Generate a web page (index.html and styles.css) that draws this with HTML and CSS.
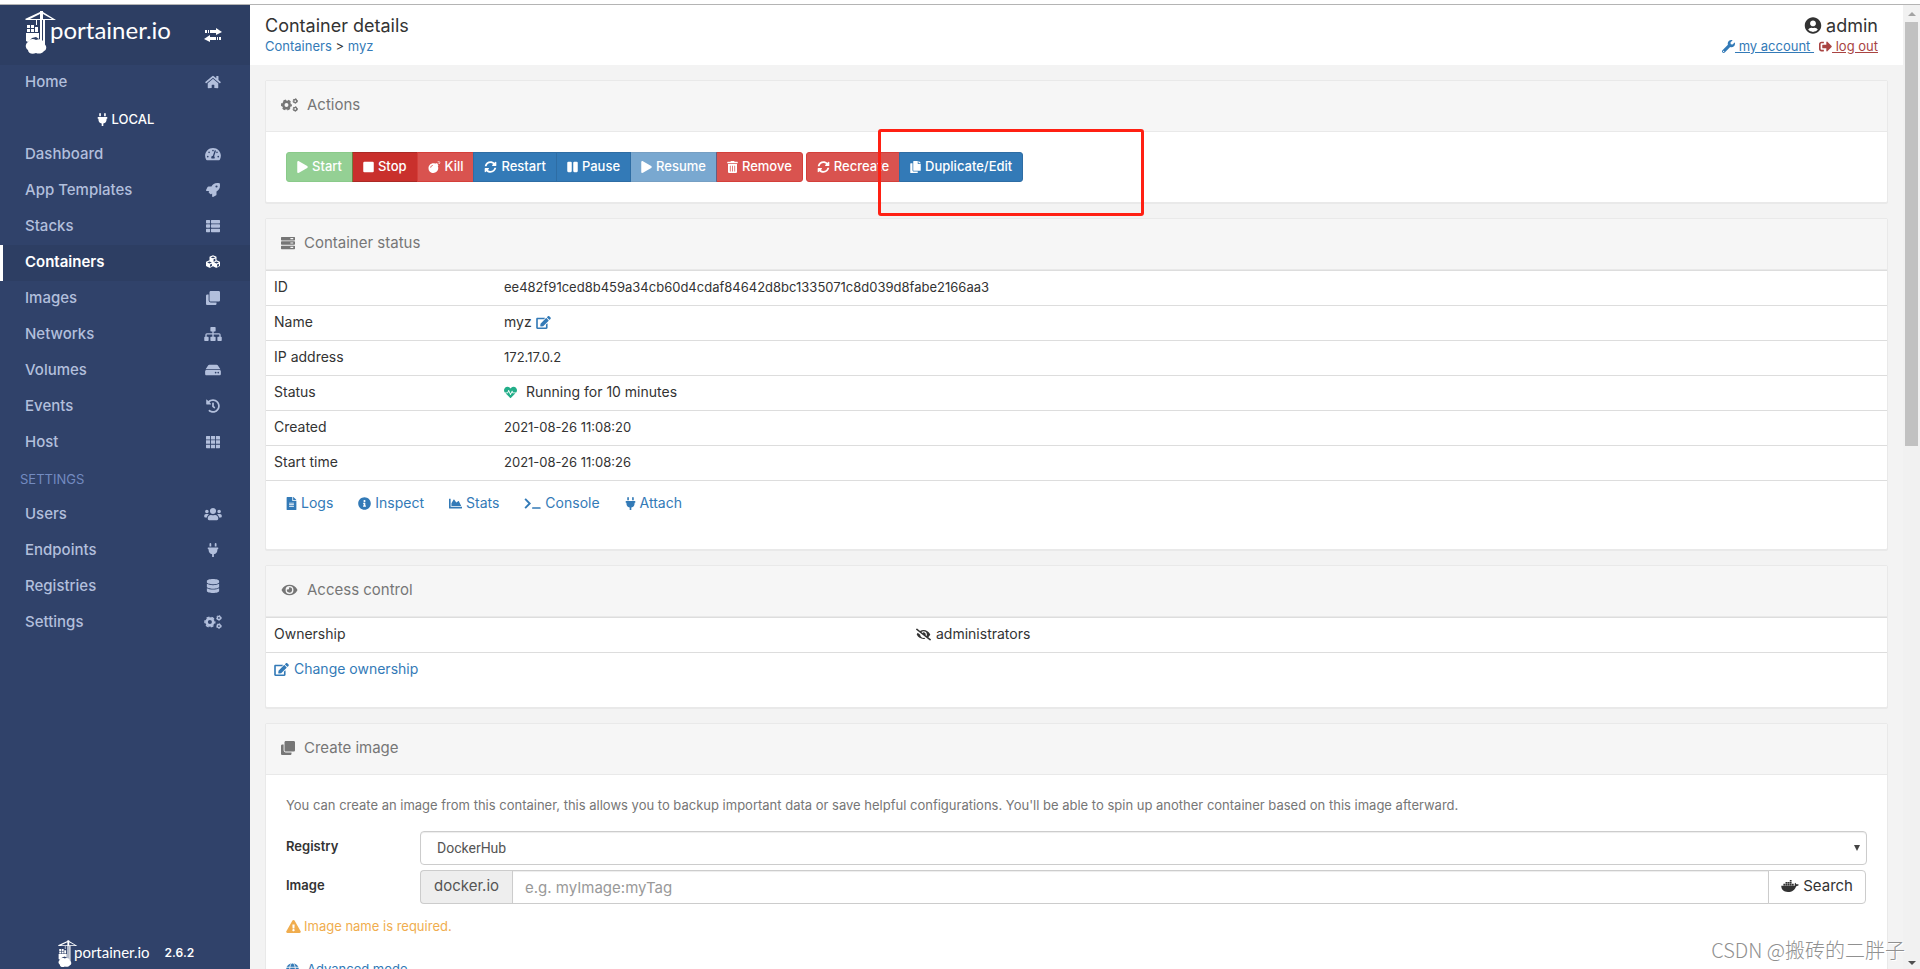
FILE: index.html
```html
<!DOCTYPE html>
<html lang="en">
<head>
<meta charset="utf-8">
<title>Portainer - Container details</title>
<link rel="stylesheet" href="styles.css">
</head>
<body>
<svg class="sprite" aria-hidden="true">
  <symbol id="home" viewBox="0 0 576 512"><path d="M280.37 148.26L96 300.11V464a16 16 0 0 0 16 16l112.06-.29a16 16 0 0 0 15.92-16V368a16 16 0 0 1 16-16h64a16 16 0 0 1 16 16v95.64a16 16 0 0 0 16 16.05L464 480a16 16 0 0 0 16-16V300L295.67 148.26a12.19 12.19 0 0 0-15.3 0zM571.6 251.47L488 182.56V44.05a12 12 0 0 0-12-12h-56a12 12 0 0 0-12 12v72.61L318.47 43a48 48 0 0 0-61 0L4.34 251.47a12 12 0 0 0-1.6 16.9l25.5 31A12 12 0 0 0 45.15 301l235.22-193.74a12.19 12.19 0 0 1 15.3 0L530.9 301a12 12 0 0 0 16.9-1.6l25.5-31a12 12 0 0 0-1.7-16.93z"/></symbol>
  <symbol id="plug" viewBox="0 0 384 512"><path d="M320,32a32,32,0,0,0-64,0v96h64Zm48,128H16A16,16,0,0,0,0,176v32a16,16,0,0,0,16,16H32v32A160.07,160.07,0,0,0,160,412.8V512h64V412.8A160.07,160.07,0,0,0,352,256V224h16a16,16,0,0,0,16-16V176A16,16,0,0,0,368,160ZM128,32a32,32,0,0,0-64,0v96h64Z"/></symbol>
  <symbol id="gauge" viewBox="0 0 576 512"><path d="M288 32C128.94 32 0 160.94 0 320c0 52.8 14.25 102.26 39.06 144.8 5.61 9.62 16.3 15.2 27.44 15.2h443c11.14 0 21.83-5.58 27.44-15.2C561.75 422.26 576 372.8 576 320c0-159.06-128.94-288-288-288zm0 64c14.71 0 26.58 10.13 30.32 23.65-1.11 2.26-2.64 4.23-3.45 6.67l-9.22 27.67c-5.13 3.49-10.97 6.01-17.64 6.01-17.67 0-32-14.33-32-32S270.33 96 288 96zM96 384c-17.67 0-32-14.33-32-32s14.33-32 32-32 32 14.33 32 32-14.33 32-32 32zm48-160c-17.67 0-32-14.33-32-32s14.33-32 32-32 32 14.33 32 32-14.33 32-32 32zm246.77-72.41l-61.33 184C343.13 347.33 352 364.54 352 384c0 11.72-3.38 22.55-8.88 32H232.88c-5.5-9.45-8.88-20.28-8.88-32 0-33.94 26.5-61.43 59.9-63.59l61.34-184.01c4.17-12.56 17.73-19.45 30.36-15.17 12.57 4.19 19.35 17.79 15.17 30.36zm14.66 57.2l15.52-46.55c3.47-1.29 7.13-2.23 11.05-2.23 17.67 0 32 14.33 32 32s-14.33 32-32 32c-11.38-.01-20.89-6.28-26.57-15.22zM480 384c-17.67 0-32-14.33-32-32s14.33-32 32-32 32 14.33 32 32-14.33 32-32 32z"/></symbol>
  <symbol id="rocket" viewBox="0 0 512 512"><path d="M505.12 19.09c-1.19-5.53-6.66-11-12.21-12.18C460.72 0 435.51 0 410.41 0 307.18 0 245.27 55.2 199.05 128H94.84c-16.35.02-35.56 11.88-42.89 26.48L2.52 253.3A28.4 28.4 0 0 0 0 264a24 24 0 0 0 24 24h103.82l-22.48 22.47c-11.36 11.36-13 32.26 0 45.25l50.91 50.9c11.15 11.19 32.15 13.16 45.27 0L224 384.16V488a24 24 0 0 0 24 24 28.56 28.56 0 0 0 10.7-2.52l98.73-49.39c14.63-7.3 26.51-26.5 26.51-42.86V312.8c72.6-46.31 128.03-108.41 128.03-211.1.1-25.2.1-50.4-6.85-82.61zM384.04 168A40 40 0 1 1 424.05 128 40 40 0 0 1 384.04 168z"/></symbol>
  <symbol id="list" viewBox="0 0 512 512"><path d="M24 32h101a24 24 0 0 1 24 24v80a24 24 0 0 1-24 24H24a24 24 0 0 1-24-24V56a24 24 0 0 1 24-24zM205 32h283a24 24 0 0 1 24 24v80a24 24 0 0 1-24 24H205a24 24 0 0 1-24-24V56a24 24 0 0 1 24-24zM24 192h101a24 24 0 0 1 24 24v80a24 24 0 0 1-24 24H24a24 24 0 0 1-24-24v-80a24 24 0 0 1 24-24zM205 192h283a24 24 0 0 1 24 24v80a24 24 0 0 1-24 24H205a24 24 0 0 1-24-24v-80a24 24 0 0 1 24-24zM24 352h101a24 24 0 0 1 24 24v80a24 24 0 0 1-24 24H24a24 24 0 0 1-24-24v-80a24 24 0 0 1 24-24zM205 352h283a24 24 0 0 1 24 24v80a24 24 0 0 1-24 24H205a24 24 0 0 1-24-24v-80a24 24 0 0 1 24-24z"/></symbol>
  <symbol id="cubes" viewBox="0 0 512 512"><path fill-rule="evenodd" d="M256 8l112 44q16 7 16 24v120l106 42q22 9 22 30v116q0 18-16 26l-108 54q-12 6-24 0l-108-54-108 54q-12 6-24 0L16 410Q0 402 0 384V268q0-21 22-30l106-42V76q0-17 16-24zM256 56l-84 32 84 34 84-34zM276 158v88l66-26v-90zM128 242l-86 32 86 34 86-34zM148 348v86l68-34v-84zM384 242l-86 32 86 34 86-34zM404 348v86l68-34v-84z"/></symbol>
  <symbol id="clone" viewBox="0 0 512 512"><path d="M464 0c26.510 0 48 21.490 48 48v288c0 26.510-21.490 48-48 48H176c-26.510 0-48-21.490-48-48V48c0-26.510 21.490-48 48-48h288M176 416c-44.112 0-80-35.888-80-80V128H48c-26.510 0-48 21.490-48 48v288c0 26.510 21.490 48 48 48h288c26.510 0 48-21.490 48-48v-48H176z"/></symbol>
  <symbol id="sitemap" viewBox="0 0 640 512"><path d="M248 0h144a24 24 0 0 1 24 24v112a24 24 0 0 1-24 24h-48v64h200a56 56 0 0 1 56 56v72h16a24 24 0 0 1 24 24v112a24 24 0 0 1-24 24H504a24 24 0 0 1-24-24V376a24 24 0 0 1 24-24h48v-80H344v80h48a24 24 0 0 1 24 24v112a24 24 0 0 1-24 24H248a24 24 0 0 1-24-24V376a24 24 0 0 1 24-24h48v-80H88v80h48a24 24 0 0 1 24 24v112a24 24 0 0 1-24 24H24a24 24 0 0 1-24-24V376a24 24 0 0 1 24-24h16v-72a56 56 0 0 1 56-56h200v-64h-48a24 24 0 0 1-24-24V24a24 24 0 0 1 24-24z"/></symbol>
  <symbol id="hdd" viewBox="0 0 576 512"><path d="M576 304v96c0 26.51-21.49 48-48 48H48c-26.51 0-48-21.49-48-48v-96c0-26.51 21.49-48 48-48h480c26.51 0 48 21.49 48 48zm-48-80a79.557 79.557 0 0 1 30.777 6.165L462.25 85.374A48.003 48.003 0 0 0 422.311 64H153.689a48 48 0 0 0-39.938 21.374L17.223 230.165A79.557 79.557 0 0 1 48 224h480zm-48 96c-17.673 0-32 14.327-32 32s14.327 32 32 32 32-14.327 32-32-14.327-32-32-32zm-96 0c-17.673 0-32 14.327-32 32s14.327 32 32 32 32-14.327 32-32-14.327-32-32-32z"/></symbol>
  <symbol id="history" viewBox="0 0 512 512"><path d="M504 255.531c.253 136.64-111.18 248.372-247.82 248.468-59.015.042-113.223-20.53-155.822-54.911-11.077-8.94-11.905-25.541-1.839-35.607l11.267-11.267c8.609-8.609 22.353-9.551 31.891-1.984C173.062 425.135 212.781 440 256 440c101.705 0 184-82.311 184-184 0-101.705-82.311-184-184-184-48.814 0-93.149 18.969-126.068 49.932l50.754 50.754c10.08 10.08 2.941 27.314-11.313 27.314H24c-8.837 0-16-7.163-16-16V38.627c0-14.254 17.234-21.393 27.314-11.314l49.372 49.372C129.209 34.136 189.552 8 256 8c136.81 0 247.747 110.78 248 247.531zm-180.912 78.784l9.823-12.63c8.138-10.463 6.253-25.542-4.21-33.679L288 256.349V152c0-13.255-10.745-24-24-24h-16c-13.255 0-24 10.745-24 24v135.651l65.409 50.874c10.463 8.137 25.541 6.253 33.679-4.21z"/></symbol>
  <symbol id="grid" viewBox="0 0 512 512"><path d="M24 32h125v128H0V56a24 24 0 0 1 24-24zM181 32h150v128H181zM363 32h125a24 24 0 0 1 24 24v104H363zM0 192h149v128H0zM181 192h150v128H181zM363 192h149v128H363zM0 352h149v128H24a24 24 0 0 1-24-24zM181 352h150v128H181zM363 352h149v104a24 24 0 0 1-24 24H363z"/></symbol>
  <symbol id="users" viewBox="0 0 640 512"><path d="M96 224c35.3 0 64-28.7 64-64s-28.7-64-64-64-64 28.7-64 64 28.7 64 64 64zm448 0c35.3 0 64-28.7 64-64s-28.7-64-64-64-64 28.7-64 64 28.7 64 64 64zm32 32h-64c-17.6 0-33.5 7.100-45.100 18.600 40.300 22.100 68.900 62 75.100 109.400h66c17.700 0 32-14.300 32-32v-32c0-35.300-28.700-64-64-64zm-256 0c61.900 0 112-50.100 112-112S381.900 32 320 32 208 82.100 208 144s50.100 112 112 112zm76.800 32h-8.300c-20.800 10-43.900 16-68.500 16s-47.600-6-68.500-16h-8.300C179.600 288 128 339.600 128 403.200V432c0 26.500 21.500 48 48 48h288c26.500 0 48-21.500 48-48v-28.800c0-63.600-51.600-115.200-115.200-115.200zm-223.700-13.400C161.500 263.100 145.600 256 128 256H64c-35.300 0-64 28.700-64 64v32c0 17.700 14.300 32 32 32h65.900c6.300-47.400 34.900-87.300 75.200-109.400z"/></symbol>
  <symbol id="database" viewBox="0 0 448 512"><path d="M448 73.143v45.714C448 159.143 347.667 192 224 192S0 159.143 0 118.857V73.143C0 32.857 100.333 0 224 0s224 32.857 224 73.143zM448 176v102.857C448 319.143 347.667 352 224 352S0 319.143 0 278.857V176c48.125 33.143 136.208 48.572 224 48.572S399.874 209.143 448 176zm0 160v102.857C448 479.143 347.667 512 224 512S0 479.143 0 438.857V336c48.125 33.143 136.208 48.572 224 48.572S399.874 369.143 448 336z"/></symbol>
  <symbol id="cogs" viewBox="0 0 640 512"><g fill="none" stroke="currentColor"><circle cx="206" cy="256" r="122" stroke-width="96"/><circle cx="206" cy="256" r="180" stroke-width="52" stroke-dasharray="110 78.500" stroke-dashoffset="55"/><circle cx="536" cy="106" r="58" stroke-width="50"/><circle cx="536" cy="106" r="88" stroke-width="32" stroke-dasharray="52 40.150"/><circle cx="536" cy="406" r="58" stroke-width="50"/><circle cx="536" cy="406" r="88" stroke-width="32" stroke-dasharray="52 40.150"/></g></symbol>
  <symbol id="play" viewBox="0 0 448 512"><path d="M424.400 214.700L72.400 6.600C43.800-10.300 0 6.100 0 47.900V464c0 37.500 40.700 60.100 72.400 41.300l352-208c31.400-18.500 31.500-64.100 0-82.600z"/></symbol>
  <symbol id="stop" viewBox="0 0 448 512"><rect y="32" width="448" height="448" rx="48"/></symbol>
  <symbol id="pause" viewBox="0 0 448 512"><rect y="31" width="192" height="448" rx="48"/><rect x="256" y="31" width="192" height="448" rx="48"/></symbol>
  <symbol id="bomb" viewBox="0 0 512 512"><path d="M440.500 88.500l-52 52L415 167c9.400 9.400 9.400 24.600 0 33.900l-17.400 17.400c11.800 26.100 18.400 55.100 18.400 85.600 0 114.900-93.100 208-208 208S0 418.900 0 304 93.100 96 208 96c30.500 0 59.500 6.600 85.600 18.400L311 97c9.400-9.400 24.600-9.400 33.900 0l26.500 26.500 52-52 17.100 17zM500 60h-24c-6.600 0-12 5.400-12 12s5.400 12 12 12h24c6.600 0 12-5.400 12-12s-5.400-12-12-12zM440 0c-6.600 0-12 5.400-12 12v24c0 6.600 5.400 12 12 12s12-5.400 12-12V12c0-6.600-5.400-12-12-12zm33.900 55l17-17c4.700-4.700 4.700-12.300 0-17-4.700-4.700-12.300-4.700-17 0l-17 17c-4.700 4.700-4.700 12.300 0 17 4.800 4.700 12.400 4.700 17 0zm-67.800 0c4.700 4.700 12.300 4.700 17 0 4.700-4.700 4.700-12.300 0-17l-17-17c-4.700-4.700-12.300-4.700-17 0-4.700 4.700-4.700 12.300 0 17l17 17zm67.800 34c-4.700-4.700-12.300-4.700-17 0-4.700 4.700-4.700 12.300 0 17l17 17c4.700 4.700 12.300 4.700 17 0 4.700-4.700 4.700-12.300 0-17l-17-17zM112 272c0-35.300 28.700-64 64-64 8.800 0 16-7.200 16-16s-7.200-16-16-16c-52.900 0-96 43.100-96 96 0 8.800 7.200 16 16 16s16-7.200 16-16z"/></symbol>
  <symbol id="sync" viewBox="0 0 512 512"><path d="M370.720 133.280C339.458 104.008 298.888 87.962 255.848 88c-77.458.068-144.328 53.178-162.791 126.850-1.344 5.363-6.122 9.150-11.651 9.150H24.103c-7.498 0-13.194-6.807-11.807-14.176C33.933 94.924 134.813 8 256 8c66.448 0 126.791 26.136 171.315 68.685L463.030 40.970C478.149 25.851 504 36.559 504 57.941V192c0 13.255-10.745 24-24 24H345.941c-21.382 0-32.090-25.851-16.971-40.971l41.750-41.749zM32 296h134.059c21.382 0 32.090 25.851 16.971 40.971l-41.750 41.750c31.262 29.273 71.835 45.319 114.876 45.280 77.418-.070 144.315-53.144 162.787-126.849 1.344-5.363 6.122-9.150 11.651-9.150h57.304c7.498 0 13.194 6.807 11.807 14.176C478.067 417.076 377.187 504 256 504c-66.448 0-126.791-26.136-171.315-68.685L48.970 471.030C33.851 486.149 8 475.441 8 454.059V320c0-13.255 10.745-24 24-24z"/></symbol>
  <symbol id="trash" viewBox="0 0 448 512"><path d="M32 464a48 48 0 0 0 48 48h288a48 48 0 0 0 48-48V128H32zm272-256a16 16 0 0 1 32 0v224a16 16 0 0 1-32 0zm-96 0a16 16 0 0 1 32 0v224a16 16 0 0 1-32 0zm-96 0a16 16 0 0 1 32 0v224a16 16 0 0 1-32 0zM432 32H312l-9.400-18.700A24 24 0 0 0 281.100 0H166.800a23.720 23.720 0 0 0-21.400 13.300L136 32H16A16 16 0 0 0 0 48v32a16 16 0 0 0 16 16h416a16 16 0 0 0 16-16V48a16 16 0 0 0-16-16z"/></symbol>
  <symbol id="copy" viewBox="0 0 448 512"><path d="M320 448v40c0 13.255-10.745 24-24 24H24c-13.255 0-24-10.745-24-24V120c0-13.255 10.745-24 24-24h72v296c0 30.879 25.121 56 56 56h168zm0-344V0H152c-13.255 0-24 10.745-24 24v368c0 13.255 10.745 24 24 24h272c13.255 0 24-10.745 24-24V128H344c-13.200 0-24-10.800-24-24zm120.971-31.029L375.029 7.029A24 24 0 0 0 358.059 0H352v96h96v-6.059a24 24 0 0 0-7.029-16.970z"/></symbol>
  <symbol id="server" viewBox="0 0 512 512"><path fill-rule="evenodd" d="M24 32h464a24 24 0 0 1 24 24v80a24 24 0 0 1-24 24H24a24 24 0 0 1-24-24V56a24 24 0 0 1 24-24zM24 192h464a24 24 0 0 1 24 24v80a24 24 0 0 1-24 24H24a24 24 0 0 1-24-24v-80a24 24 0 0 1 24-24zM24 352h464a24 24 0 0 1 24 24v80a24 24 0 0 1-24 24H24a24 24 0 0 1-24-24v-80a24 24 0 0 1 24-24zM344 76h104v40H344zM344 236h104v40H344zM344 396h104v40H344z"/></symbol>
  <symbol id="edit" viewBox="0 0 576 512"><path d="M402.600 83.200l90.200 90.200c3.800 3.800 3.800 10 0 13.800L274.400 405.600l-92.800 10.300c-12.400 1.400-22.900-9.100-21.500-21.500l10.300-92.800L388.800 83.200c3.800-3.800 10-3.800 13.800 0zm162-22.900l-48.800-48.800c-15.200-15.200-39.900-15.200-55.200 0l-35.400 35.400c-3.800 3.800-3.800 10 0 13.800l90.200 90.200c3.800 3.800 10 3.800 13.800 0l35.400-35.400c15.200-15.300 15.200-40 0-55.200zM384 346.200V448H64V128h229.800c3.200 0 6.200-1.300 8.500-3.500l40-40c7.600-7.600 2.200-20.500-8.500-20.500H48C21.500 64 0 85.500 0 112v352c0 26.500 21.500 48 48 48h352c26.500 0 48-21.500 48-48V306.200c0-10.700-12.900-16-20.500-8.500l-40 40c-2.200 2.300-3.500 5.300-3.500 8.500z"/></symbol>
  <symbol id="heartbeat" viewBox="0 0 512 512"><path d="M320.200 243.800l-49.700 99.400c-6 12.100-23.400 11.700-28.900-.6l-56.900-126.300-30 71.700H60.600l182.500 186.500c7.100 7.300 18.600 7.300 25.700 0L451.400 288H342.300l-22.100-44.200zM473.700 73.900l-2.400-2.500c-51.500-52.600-135.800-52.600-187.400 0L256 100l-27.900-28.500c-51.500-52.700-135.900-52.700-187.400 0l-2.400 2.400C-10.400 123.700-12.500 203 31 256h102.400l35.900-86.200c5.400-12.900 23.600-13.200 29.400-.4l58.200 129.300 49-97.900c5.900-11.800 22.700-11.800 28.600 0l27.600 55.200H481c43.500-53 41.400-132.300-7.300-182.100z"/></symbol>
  <symbol id="file" viewBox="0 0 384 512"><path d="M224 136V0H24C10.700 0 0 10.700 0 24v464c0 13.300 10.700 24 24 24h336c13.300 0 24-10.700 24-24V160H248c-13.200 0-24-10.800-24-24zm64 236c0 6.600-5.400 12-12 12H108c-6.600 0-12-5.400-12-12v-8c0-6.600 5.400-12 12-12h168c6.600 0 12 5.400 12 12v8zm0-64c0 6.600-5.400 12-12 12H108c-6.600 0-12-5.400-12-12v-8c0-6.600 5.400-12 12-12h168c6.600 0 12 5.400 12 12v8zm0-72v8c0 6.600-5.400 12-12 12H108c-6.600 0-12-5.400-12-12v-8c0-6.600 5.400-12 12-12h168c6.600 0 12 5.400 12 12zm96-114.100v6.100H256V0h6.100c6.400 0 12.500 2.500 17 7l97.900 98c4.500 4.500 7 10.600 7 16.900z"/></symbol>
  <symbol id="info" viewBox="0 0 512 512"><path d="M256 8C119.043 8 8 119.083 8 256c0 136.997 111.043 248 248 248s248-111.003 248-248C504 119.083 392.957 8 256 8zm0 110c23.196 0 42 18.804 42 42s-18.804 42-42 42-42-18.804-42-42 18.804-42 42-42zm56 254c0 6.627-5.373 12-12 12h-88c-6.627 0-12-5.373-12-12v-24c0-6.627 5.373-12 12-12h12v-64h-12c-6.627 0-12-5.373-12-12v-24c0-6.627 5.373-12 12-12h64c6.627 0 12 5.373 12 12v100h12c6.627 0 12 5.373 12 12v24z"/></symbol>
  <symbol id="chart" viewBox="0 0 512 512"><path d="M500 384c6.600 0 12 5.400 12 12v40c0 6.600-5.400 12-12 12H12c-6.600 0-12-5.400-12-12V76c0-6.600 5.400-12 12-12h40c6.600 0 12 5.400 12 12v308h436zM372.700 159.500L288 216l-85.300-113.700c-5.100-6.800-15.500-6.300-19.900 1L96 248v104h384l-89.900-187.800c-3.200-6.500-11.400-8.700-17.400-4.700z"/></symbol>
  <symbol id="terminal" viewBox="0 0 640 512"><path d="M30 74l180 182L30 438" fill="none" stroke="currentColor" stroke-width="74"/><rect x="304" y="400" width="336" height="64" rx="20"/></symbol>
  <symbol id="eye" viewBox="0 0 576 512"><path d="M572.520 241.400C518.290 135.590 410.930 64 288 64S57.680 135.640 3.480 241.410a32.350 32.350 0 0 0 0 29.190C57.710 376.410 165.070 448 288 448s230.320-71.640 284.520-177.410a32.350 32.350 0 0 0 0-29.190zM288 400a144 144 0 1 1 144-144 143.930 143.930 0 0 1-144 144zm0-240a95.310 95.310 0 0 0-25.310 3.790 47.850 47.850 0 0 1-66.900 66.900A95.780 95.780 0 1 0 288 160z"/></symbol>
  <symbol id="eye-slash" viewBox="0 0 640 512"><path d="M320 400c-75.850 0-137.250-58.710-142.900-133.110L72.200 185.820c-13.790 17.300-26.480 35.590-36.720 55.590a32.350 32.350 0 0 0 0 29.190C89.710 376.410 197.070 448 320 448c26.910 0 52.870-4 77.890-10.460L346 397.390a144.130 144.130 0 0 1-26 2.610zm313.820 58.100l-110.550-85.440a331.250 331.250 0 0 0 81.250-102.070 32.350 32.350 0 0 0 0-29.190C550.290 135.590 442.930 64 320 64a308.150 308.150 0 0 0-147.320 37.700L45.460 3.370A16 16 0 0 0 23 6.180L3.370 31.450A16 16 0 0 0 6.180 53.900l588.360 454.730a16 16 0 0 0 22.460-2.810l19.640-25.270a16 16 0 0 0-2.820-22.450zm-183.720-142l-39.300-30.380A94.750 94.750 0 0 0 416 256a94.760 94.760 0 0 0-121.310-92.210A47.650 47.650 0 0 1 304 192a46.640 46.640 0 0 1-1.540 10l-73.610-56.890A142.310 142.310 0 0 1 320 112a143.920 143.920 0 0 1 144 144c0 21.630-5.290 41.790-13.900 60.110z"/></symbol>
  <symbol id="warning" viewBox="0 0 576 512"><path d="M569.517 440.013C587.975 472.007 564.806 512 527.940 512H48.054c-36.937 0-59.999-40.055-41.577-71.987L246.423 23.985c18.467-32.009 64.720-31.951 83.154 0l239.940 416.028zM288 354c-25.405 0-46 20.595-46 46s20.595 46 46 46 46-20.595 46-46-20.595-46-46-46zm-43.673-165.346l7.418 136c.347 6.364 5.609 11.346 11.982 11.346h48.546c6.373 0 11.635-4.982 11.982-11.346l7.418-136c.375-6.874-5.098-12.654-11.982-12.654h-63.383c-6.884 0-12.356 5.780-11.981 12.654z"/></symbol>
  <symbol id="user" viewBox="0 0 496 512"><path d="M248 8C111 8 0 119 0 256s111 248 248 248 248-111 248-248S385 8 248 8zm0 96c48.600 0 88 39.400 88 88s-39.400 88-88 88-88-39.400-88-88 39.400-88 88-88zm0 344c-58.700 0-111.300-26.600-146.500-68.200 18.800-35.400 55.600-59.800 98.500-59.800 2.400 0 4.800.4 7.100 1.100 13 4.200 26.600 6.900 40.900 6.900 14.300 0 28-2.700 40.900-6.900 2.300-.7 4.700-1.100 7.100-1.100 42.900 0 79.700 24.400 98.500 59.800C359.300 421.400 306.700 448 248 448z"/></symbol>
  <symbol id="wrench" viewBox="0 0 512 512"><path d="M507.730 109.100c-2.240-9.030-13.540-12.090-20.120-5.510l-74.360 74.360-67.880-11.310-11.310-67.880 74.360-74.360c6.620-6.620 3.430-17.900-5.660-20.160-47.380-11.740-99.550.91-136.580 37.930-39.640 39.640-50.550 97.100-34.050 147.200L18.740 402.760c-24.990 24.990-24.990 65.510 0 90.500 24.990 24.990 65.510 24.990 90.500 0l213.210-213.210c50.120 16.710 107.470 5.680 147.370-34.220 37.070-37.070 49.700-89.320 37.910-136.730zM64 472c-13.250 0-24-10.750-24-24 0-13.260 10.750-24 24-24s24 10.740 24 24c0 13.250-10.750 24-24 24z"/></symbol>
  <symbol id="signout" viewBox="0 0 512 512"><path d="M497 273L329 441c-15 15-41 4.500-41-17v-96H152c-13.300 0-24-10.700-24-24v-96c0-13.300 10.700-24 24-24h136V88c0-21.400 25.900-32 41-17l168 168c9.300 9.400 9.300 24.600 0 34zM192 436v-40c0-6.600-5.400-12-12-12H96c-17.700 0-32-14.300-32-32V160c0-17.700 14.300-32 32-32h84c6.600 0 12-5.400 12-12V76c0-6.600-5.400-12-12-12H96c-53 0-96 43-96 96v192c0 53 43 96 96 96h84c6.600 0 12-5.400 12-12z"/></symbol>
  <symbol id="globe" viewBox="0 0 512 512"><g fill="none" stroke="#fff" stroke-width="32"><circle cx="256" cy="256" r="248" fill="currentColor" stroke="none"/><ellipse cx="256" cy="256" rx="112" ry="260"/><path d="M0 168h512M0 344h512"/></g></symbol>
  <symbol id="docker" viewBox="0 0 640 512"><path d="M0 250h470c22-4 30-12 32-22-18-32-12-66 8-90 24 14 36 32 38 58 36-6 68-2 92 14-16 36-46 52-92 52C494 400 404 472 244 472 90 472 4 396 0 250zM78 176h66v58H78zM156 176h66v58h-66zM234 176h66v58h-66zM312 176h66v58h-66zM390 176h66v58h-66zM156 106h66v58h-66zM234 106h66v58h-66zM312 106h66v58h-66zM312 36h66v58h-66z"/></symbol>
  <symbol id="toggle" viewBox="0 0 18 14"><path d="M1 2h2v3H1zM4 2h1v3H4zM6 2h6V0l6 4-6 3V5H6zM17 9h-2v3h2zM14 9h-1v3h1zM12 9H6V7l-6 4 6 3v-2h6z"/></symbol>
  <symbol id="crane" viewBox="0 0 32 44"><path d="M0 8l15-7V0h3v1l13 8H20v28h-2V9h-1v25h-2V9H1zM5 8h10V3zM18 8h9l-9-5z" fill-rule="evenodd"/><path d="M11 9h1v5h-1zM2 14h3v3H2zM6 14h3v3H6zM2 18h3v3H2zM6 18h3v3H6zM10 16h3v5h-3zM1 22h13v6l-3-2-4 1-4 4-2-1z"/><path d="M3 31c1-3 5-4 8-2 4-2 8 0 8 4 3 1 3 6 0 7-2 3-6 3-8 2-4 2-8 0-8-3-3-2-3-6 0-8z"/></symbol>
</svg>

<div class="app">
  <nav class="sidebar">
    <div class="sidebar-head">
      <a class="brand" href="#"><svg class="brand-mark"><use href="#crane"/></svg><span class="brand-name">portainer.io</span></a>
      <button class="toggle" type="button" aria-label="Toggle sidebar"><svg class="toggle-icon"><use href="#toggle"/></svg></button>
    </div>
    <a class="nav-item" href="#">Home<svg class="nav-icon"><use href="#home"/></svg></a>
    <div class="nav-endpoint"><svg class="icon"><use href="#plug"/></svg>LOCAL</div>
    <a class="nav-item" href="#">Dashboard<svg class="nav-icon"><use href="#gauge"/></svg></a>
    <a class="nav-item" href="#">App Templates<svg class="nav-icon"><use href="#rocket"/></svg></a>
    <a class="nav-item" href="#">Stacks<svg class="nav-icon"><use href="#list"/></svg></a>
    <a class="nav-item active" href="#">Containers<svg class="nav-icon"><use href="#cubes"/></svg></a>
    <a class="nav-item" href="#">Images<svg class="nav-icon"><use href="#clone"/></svg></a>
    <a class="nav-item" href="#">Networks<svg class="nav-icon"><use href="#sitemap"/></svg></a>
    <a class="nav-item" href="#">Volumes<svg class="nav-icon"><use href="#hdd"/></svg></a>
    <a class="nav-item" href="#">Events<svg class="nav-icon"><use href="#history"/></svg></a>
    <a class="nav-item" href="#">Host<svg class="nav-icon"><use href="#grid"/></svg></a>
    <div class="nav-title">SETTINGS</div>
    <a class="nav-item" href="#">Users<svg class="nav-icon"><use href="#users"/></svg></a>
    <a class="nav-item" href="#">Endpoints<svg class="nav-icon"><use href="#plug"/></svg></a>
    <a class="nav-item" href="#">Registries<svg class="nav-icon"><use href="#database"/></svg></a>
    <a class="nav-item" href="#">Settings<svg class="nav-icon"><use href="#cogs"/></svg></a>
    <div class="sidebar-foot">
      <span class="brand small"><svg class="brand-mark"><use href="#crane"/></svg><span class="brand-name">portainer.io</span></span>
      <span class="version">2.6.2</span>
    </div>
  </nav>

  <main class="content">
    <header class="page-head">
      <div>
        <h1 class="title">Container details</h1>
        <div class="crumbs"><a href="#">Containers</a> &gt; <a href="#">myz</a></div>
      </div>
      <div class="user">
        <div class="title"><svg class="icon"><use href="#user"/></svg>admin</div>
        <div class="user-links"><a class="underlined" href="#"><svg class="icon"><use href="#wrench"/></svg> my account&nbsp;</a><a class="underlined danger" href="#"><svg class="icon"><use href="#signout"/></svg> log out</a></div>
      </div>
    </header>

    <div class="panels">
      <section class="panel">
        <h2 class="panel-head"><svg class="icon wide"><use href="#cogs"/></svg>Actions</h2>
        <div class="panel-body actions">
          <div class="btn-group">
            <button class="btn success" type="button" disabled><svg class="icon slim"><use href="#play"/></svg>Start</button>
            <button class="btn danger-dark" type="button"><svg class="icon slim"><use href="#stop"/></svg>Stop</button>
            <button class="btn danger-btn" type="button"><svg class="icon"><use href="#bomb"/></svg>Kill</button>
            <button class="btn primary" type="button"><svg class="icon"><use href="#sync"/></svg>Restart</button>
            <button class="btn primary" type="button"><svg class="icon slim"><use href="#pause"/></svg>Pause</button>
            <button class="btn primary" type="button" disabled><svg class="icon slim"><use href="#play"/></svg>Resume</button>
            <button class="btn danger-btn" type="button"><svg class="icon slim"><use href="#trash"/></svg>Remove</button>
          </div>
          <div class="btn-group">
            <button class="btn danger-btn" type="button"><svg class="icon"><use href="#sync"/></svg>Recreate</button>
            <button class="btn primary marked" type="button"><svg class="icon slim"><use href="#copy"/></svg>Duplicate/Edit</button>
          </div>
        </div>
      </section>

      <section class="panel">
        <h2 class="panel-head"><svg class="icon"><use href="#server"/></svg>Container status</h2>
        <table class="details">
          <tr><th scope="row">ID</th><td class="value">ee482f91ced8b459a34cb60d4cdaf84642d8bc1335071c8d039d8fabe2166aa3</td></tr>
          <tr><th scope="row">Name</th><td>myz <a href="#" aria-label="Rename"><svg class="icon wide"><use href="#edit"/></svg></a></td></tr>
          <tr><th scope="row">IP address</th><td class="value">172.17.0.2</td></tr>
          <tr><th scope="row">Status</th><td><svg class="icon healthy"><use href="#heartbeat"/></svg>Running for 10 minutes</td></tr>
          <tr><th scope="row">Created</th><td class="value">2021-08-26 11:08:20</td></tr>
          <tr><th scope="row">Start time</th><td class="value">2021-08-26 11:08:26</td></tr>
        </table>
        <div class="quick-links">
          <a href="#"><svg class="icon slim"><use href="#file"/></svg>Logs</a>
          <a href="#"><svg class="icon"><use href="#info"/></svg>Inspect</a>
          <a href="#"><svg class="icon"><use href="#chart"/></svg>Stats</a>
          <a href="#"><svg class="icon wide"><use href="#terminal"/></svg>Console</a>
          <a href="#"><svg class="icon slim"><use href="#plug"/></svg>Attach</a>
        </div>
      </section>

      <section class="panel">
        <h2 class="panel-head"><svg class="icon wide"><use href="#eye"/></svg>Access control</h2>
        <table class="details access">
          <tr><th scope="row">Ownership</th><td><svg class="icon wide gap"><use href="#eye-slash"/></svg>administrators</td></tr>
          <tr><td colspan="2"><a href="#"><svg class="icon wide gap"><use href="#edit"/></svg>Change ownership</a></td></tr>
        </table>
      </section>

      <section class="panel">
        <h2 class="panel-head"><svg class="icon"><use href="#clone"/></svg>Create image</h2>
        <form class="panel-body image-form">
          <p class="hint">You can create an image from this container, this allows you to backup important data or save helpful configurations. You'll be able to spin up another container based on this image afterward.</p>
          <div class="field">
            <label for="registry">Registry</label>
            <div class="select-wrap"><select id="registry" class="control"><option>DockerHub</option></select></div>
          </div>
          <div class="field">
            <label for="image">Image</label>
            <div class="input-group">
              <span class="addon">docker.io</span>
              <input id="image" class="control" type="text" placeholder="e.g. myImage:myTag">
              <button class="search" type="button"><svg class="icon"><use href="#docker"/></svg>Search</button>
            </div>
          </div>
          <p class="warn"><svg class="icon wide"><use href="#warning"/></svg>Image name is required.</p>
          <a class="advanced" href="#"><svg class="icon"><use href="#globe"/></svg>Advanced mode</a>
        </form>
      </section>
    </div>
  </main>

  <div class="scrollbar" aria-hidden="true"><i class="arrow up"></i><i class="thumb"></i><i class="arrow down"></i></div>
</div>
<div class="watermark">CSDN @搬砖的二胖子</div>
</body>
</html>
```
FILE: styles.css
```css
*, *::before, *::after { box-sizing: border-box; }

body {
  margin: 0;
  height: 100vh;
  overflow: hidden;
  padding-top: 4px;
  background: #fff;
  color: #333;
  font: 13px/18px Inter, "Open Sans", sans-serif;
}

a { color: #337ab7; text-decoration: none; }
button, input, select { font: inherit; margin: 0; }
h1, h2, p { margin: 0; font-weight: 400; }

.sprite { position: absolute; width: 0; height: 0; }
svg { fill: currentColor; flex: none; }

.icon { width: 13px; height: 13px; vertical-align: -2px; }
.icon.wide { width: 15px; }

.app {
  display: flex;
  height: 100%;
  border-top: 1px solid #b4b4b4;
}

/* Sidebar */
.sidebar {
  display: flex;
  flex-direction: column;
  flex: none;
  width: 250px;
  background: #30426a;
}

.sidebar-head {
  display: flex;
  align-items: flex-start;
  justify-content: space-between;
  height: 60px;
  padding: 6px 28px 0 25px;
  background: #2d3e63;
}

.brand { display: flex; color: #fff; }
.brand-mark { width: 32px; height: 44px; }
.brand-name {
  margin: 4px 0 0 -7px;
  font: 24px/30px Lato, sans-serif;
}

.toggle {
  margin-top: 17px;
  padding: 0;
  border: 0;
  background: none;
  color: #fff;
  line-height: 14px;
}
.toggle-icon { display: block; width: 18px; height: 14px; }

.nav-item {
  display: flex;
  align-items: center;
  justify-content: space-between;
  height: 36px;
  padding: 0 26px 2px 22px;
  border-left: 3px solid transparent;
  color: #b2bfdc;
  font-size: 15px;
  font-weight: 500;
}
.nav-icon { width: 22px; height: 14px; }
.nav-item.active {
  border-left-color: #fff;
  background: #2d3e63;
  color: #fff;
  font-weight: 600;
}

.nav-endpoint {
  display: flex;
  align-items: center;
  justify-content: center;
  gap: 3px;
  height: 36px;
  color: #fff;
  font-size: 13px;
  font-weight: 500;
}

.nav-title {
  height: 36px;
  padding-left: 20px;
  color: #738bc0;
  font-size: 13px;
  line-height: 36px;
}

.sidebar-foot {
  display: flex;
  align-items: center;
  gap: 15px;
  height: 30px;
  margin-top: auto;
  padding-left: 58px;
  color: #fff;
}
.brand.small .brand-mark { width: 20px; height: 28px; }
.brand.small .brand-name { margin: 1px 0 0 -4px; font-size: 15px; line-height: 22px; }
.version { padding-bottom: 2px; font-size: 12px; font-weight: 600; }

/* Page */
.content {
  flex: 1;
  min-width: 0;
  overflow: hidden;
  background: #f3f3f3;
}

.page-head {
  display: flex;
  justify-content: space-between;
  height: 60px;
  padding: 10px 25px 0 15px;
  background: #fff;
}
.title { font-size: 18px; line-height: 22px; }
.title .icon { width: 18px; height: 17px; margin-right: 4px; vertical-align: -2px; }
.user { text-align: right; }
.underlined { text-decoration: underline; }
.underlined + .underlined { margin-left: 5px; }
.danger { color: #a94442; }

.panels {
  display: flex;
  flex-direction: column;
  gap: 15px;
  padding: 15px;
}

.panel {
  border: 1px solid #e9e9e9;
  border-radius: 2px;
  background: #fff;
  box-shadow: 0 1px 0 #e9e9e9;
}

.panel-head {
  height: 51px;
  padding: 0 15px;
  border-bottom: 1px solid #e9e9e9;
  background: #f6f6f6;
  color: #767676;
  font-size: 15px;
  line-height: 48px;
}
.panel-head .icon { width: 14px; height: 14px; margin-right: 9px; }
.panel-head .icon.wide { width: 17px; }

.panel-body { padding: 20px; }

/* Action buttons */
.actions { display: flex; gap: 3px; }
.btn-group { display: flex; }
.btn {
  height: 30px;
  padding: 0 10px 2px;
  border: 1px solid;
  color: #fff;
  font-size: 13px;
  font-weight: 500;
}
.btn .icon { height: 12px; margin-right: 4px; }
.icon.slim { width: 11px; }
.btn:first-child { border-radius: 3px 0 0 3px; }
.btn:last-child { border-radius: 0 3px 3px 0; }
.btn + .btn { margin-left: -1px; }
.btn:disabled { opacity: .65; }
.success { background: #5cb85c; border-color: #4cae4c; }
.primary { background: #337ab7; border-color: #2e6da4; }
.danger-btn { background: #d9534f; border-color: #d43f3a; }
.danger-dark { background: #c9302c; border-color: #ac2925; }

.marked { position: relative; }
.marked::after {
  content: "";
  position: absolute;
  left: -22px;
  top: -24px;
  width: 266px;
  height: 87px;
  border: 3px solid #ff2013;
  border-radius: 3px;
}

/* Detail tables */
.details {
  width: 100%;
  border-collapse: separate;
  border-spacing: 0;
  table-layout: fixed;
  font-size: 14px;
}
.details th, .details td {
  height: 35px;
  padding: 7px 8px 9px;
  border-top: 1px solid #ddd;
  font-weight: 400;
  text-align: left;
}
.details th { width: 230px; }
.details .value { font-size: 13px; }
.details.access th { width: 642px; }
.access { margin-bottom: 20px; }
.healthy { margin-right: 9px; color: #23ae89; }
.gap { margin-right: 5px; }

.quick-links {
  display: flex;
  gap: 25px;
  height: 69px;
  padding: 13px 20px;
  border-top: 1px solid #ddd;
  font-size: 14px;
}
.quick-links .icon { margin-right: 4px; }
.quick-links .icon.wide { width: 17px; }

/* Image form */
.image-form {
  display: flex;
  flex-direction: column;
  gap: 5px;
}
.hint { margin-bottom: 11px; color: #767676; line-height: 20px; }

.field { display: flex; }
.field label {
  flex: none;
  width: 134px;
  padding-top: 6px;
  font-weight: 600;
}
.control {
  height: 34px;
  border: 1px solid #ccc;
  background: #fff;
  color: #555;
  font-size: 15px;
  box-shadow: inset 0 1px 1px rgba(0, 0, 0, .075);
}
.select-wrap { position: relative; flex: 1; }
.select-wrap::after {
  content: "";
  position: absolute;
  right: 7px;
  top: 14px;
  border: 3px solid transparent;
  border-top: 6px solid #444;
}
.select-wrap .control {
  width: 100%;
  padding: 0 16px;
  border-radius: 4px;
  appearance: none;
  font-family: Roboto, "Liberation Sans", sans-serif;
  font-size: 14px;
}
.input-group { display: flex; flex: 1; margin-right: 1px; }
.addon {
  padding: 0 13px;
  border: 1px solid #ccc;
  border-right: 0;
  border-radius: 4px 0 0 4px;
  background: #eee;
  color: #555;
  font-size: 15px;
  line-height: 30px;
}
.input-group .control { flex: 1; min-width: 0; padding: 0 12px; }
.control::placeholder { color: #999; opacity: 1; }
.search {
  margin-left: -1px;
  padding: 0 12px 2px;
  border: 1px solid #ccc;
  border-radius: 0 4px 4px 0;
  background: #fff;
  color: #333;
  font-size: 15px;
}
.search .icon { width: 18px; height: 14px; margin-right: 4px; }

.warn { margin-top: 8px; color: #f0ad4e; }
.warn .icon { margin-right: 3px; }
.advanced { margin-top: 20px; }
.advanced .icon { margin-right: 8px; }

/* Scrollbar */
.scrollbar {
  display: flex;
  flex-direction: column;
  align-items: center;
  flex: none;
  width: 17px;
  background: #f1f1f1;
}
.thumb { width: 13px; height: 44%; margin-top: 6px; background: #c1c1c1; }
.arrow { border: 4px solid transparent; }
.arrow.up { margin-top: 3px; border-bottom-color: #a3a3a3; }
.arrow.down { margin-top: auto; border-top-color: #505050; }

.watermark {
  position: absolute;
  right: 15px;
  bottom: 5px;
  color: #909090;
  font: 300 20px/28px "Noto Sans CJK SC", sans-serif;
  text-shadow: 1px 1px 0 #fff;
}
```
